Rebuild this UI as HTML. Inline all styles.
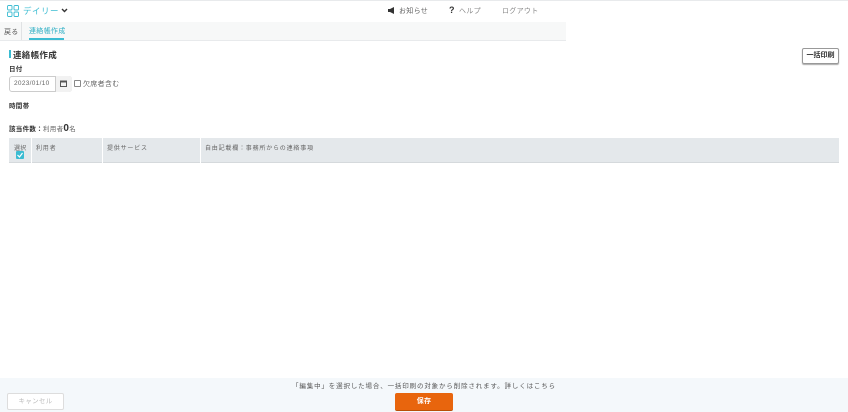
<!DOCTYPE html>
<html><head><meta charset="utf-8"><style>
*{margin:0;padding:0;box-sizing:border-box}
body{width:848px;height:412px;overflow:hidden;background:#fff;font-family:"Liberation Sans","Noto Sans CJK JP",sans-serif;position:relative;color:#333;letter-spacing:0.3px}
.a{position:absolute;white-space:nowrap}
</style></head><body>
<div class="a" style="left:0;top:0;width:848px;height:1px;background:#e8eaec"></div>
<div class="a" style="left:0;top:1px;width:566px;height:21px;background:#fff"></div>
<svg class="a" style="left:7px;top:5px" width="12" height="12" viewBox="0 0 12 12" fill="none" stroke="#3bbcd2" stroke-width="0.9"><rect x="0.5" y="0.5" width="4.5" height="4.5" rx="1"/><rect x="7" y="0.5" width="4.5" height="4.5" rx="1"/><rect x="0.5" y="7" width="4.5" height="4.5" rx="1"/><rect x="7" y="7" width="4.5" height="4.5" rx="1"/></svg>
<div class="a" style="left:23px;top:5px;font-size:8.5px;color:#3bbcd2;letter-spacing:0.5px">デイリー</div>
<svg class="a" style="left:61px;top:8px" width="7" height="5" viewBox="0 0 7 5"><path d="M1 1l2.5 2.5L6 1" stroke="#333" stroke-width="1.4" fill="none"/></svg>
<svg class="a" style="left:388px;top:7px" width="8" height="7" viewBox="0 0 8 7"><path d="M0 2h2l4-2v7l-4-2H0z" fill="#333"/></svg>
<div class="a" style="left:399px;top:6px;font-size:7px;color:#666">お知らせ</div>
<div class="a" style="left:449px;top:5px;font-size:9px;font-weight:bold;color:#333">?</div>
<div class="a" style="left:459px;top:6px;font-size:7px;color:#888">ヘルプ</div>
<div class="a" style="left:502px;top:6px;font-size:7px;color:#888">ログアウト</div>
<div class="a" style="left:0;top:22px;width:566px;height:19px;background:#f7f8f8;border-bottom:1px solid #e8eaec"></div>
<div class="a" style="left:21px;top:22px;width:1px;height:18px;background:#e0e2e4"></div>
<div class="a" style="left:4px;top:27px;font-size:7px;color:#555">戻る</div>
<div class="a" style="left:29px;top:26px;font-size:7px;color:#2aaec4">連絡帳作成</div>
<div class="a" style="left:29px;top:38px;width:35px;height:2px;background:#3bbcd2"></div>
<div class="a" style="left:9px;top:50px;width:2px;height:8px;background:#3bbcd2"></div>
<div class="a" style="left:13px;top:49px;font-size:8.5px;font-weight:bold;color:#333">連絡帳作成</div>
<div class="a" style="left:802px;top:48px;width:37px;height:16px;border:1px solid #999;border-radius:2px;box-shadow:0 1px 1px #aaa;font-size:7px;font-weight:bold;line-height:14px;text-align:center;letter-spacing:0">一括印刷</div>
<div class="a" style="left:9px;top:63px;font-size:6.5px;font-weight:bold">日付</div>
<div class="a" style="left:9px;top:76px;width:63px;height:16px;border:1px solid #ccc;border-radius:3px"></div>
<div class="a" style="left:55px;top:76px;width:17px;height:16px;border-left:1px solid #ccc;background:#f2f2f2;border-radius:0 3px 3px 0"></div>
<div class="a" style="left:14px;top:80px;font-size:6.5px;color:#666">2023/01/10</div>
<svg class="a" style="left:60px;top:80px" width="7" height="7" viewBox="0 0 7 7"><rect x="0.5" y="1" width="6" height="5.5" fill="none" stroke="#555"/><rect x="0.5" y="1" width="6" height="1.5" fill="#555"/></svg>
<div class="a" style="left:74px;top:80px;width:7px;height:7px;border:1px solid #888;border-radius:1px"></div>
<div class="a" style="left:83px;top:79px;font-size:7px;color:#666">欠席者含む</div>
<div class="a" style="left:9px;top:100px;font-size:6.5px;font-weight:bold">時間帯</div>
<div class="a" style="left:9px;top:123px;font-size:6.5px;font-weight:bold">該当件数：<span style="font-weight:normal;color:#666">利用者</span><span style="font-size:10px">0</span><span style="font-weight:normal;color:#666">名</span></div>
<div class="a" style="left:9px;top:138px;width:830px;height:25px;background:#e4e8eb;border-bottom:1px solid #d5d9dc"></div>
<div class="a" style="left:31px;top:138px;width:1px;height:25px;background:#fff"></div>
<div class="a" style="left:102px;top:138px;width:1px;height:25px;background:#fff"></div>
<div class="a" style="left:200px;top:138px;width:1px;height:25px;background:#fff"></div>
<div class="a" style="left:14px;top:143px;font-size:6px;color:#666">選択</div>
<div class="a" style="left:16px;top:151px;width:8px;height:8px;background:#3bbcd2;border-radius:1px"></div>
<svg class="a" style="left:16px;top:151px" width="8" height="8" viewBox="0 0 8 8"><path d="M1.5 4l2 2 3-4" stroke="#fff" stroke-width="1.2" fill="none"/></svg>
<div class="a" style="left:36px;top:143px;font-size:6px;color:#666;letter-spacing:0.8px">利用者</div>
<div class="a" style="left:107px;top:143px;font-size:6px;color:#666;letter-spacing:0.8px">提供サービス</div>
<div class="a" style="left:205px;top:143px;font-size:6px;color:#666;letter-spacing:0.8px">自由記載欄：事務所からの連絡事項</div>
<div class="a" style="left:0;top:378px;width:848px;height:34px;background:#f4f8fb"></div>
<div class="a" style="left:0;top:380px;width:848px;text-align:center;font-size:6.5px;color:#555;letter-spacing:0.85px">「編集中」を選択した場合、一括印刷の対象から削除されます。詳しくはこちら</div>
<div class="a" style="left:7px;top:393px;width:57px;height:17px;border:1px solid #ddd;border-radius:2px;background:#fff;font-size:6.5px;color:#bbb;text-align:center;line-height:15px">キャンセル</div>
<div class="a" style="left:395px;top:393px;width:58px;height:18px;background:#e8650d;border-radius:2px;border-bottom:1px solid #b84f08;font-size:7px;font-weight:bold;color:#fff;text-align:center;line-height:17px">保存</div>
</body></html>
